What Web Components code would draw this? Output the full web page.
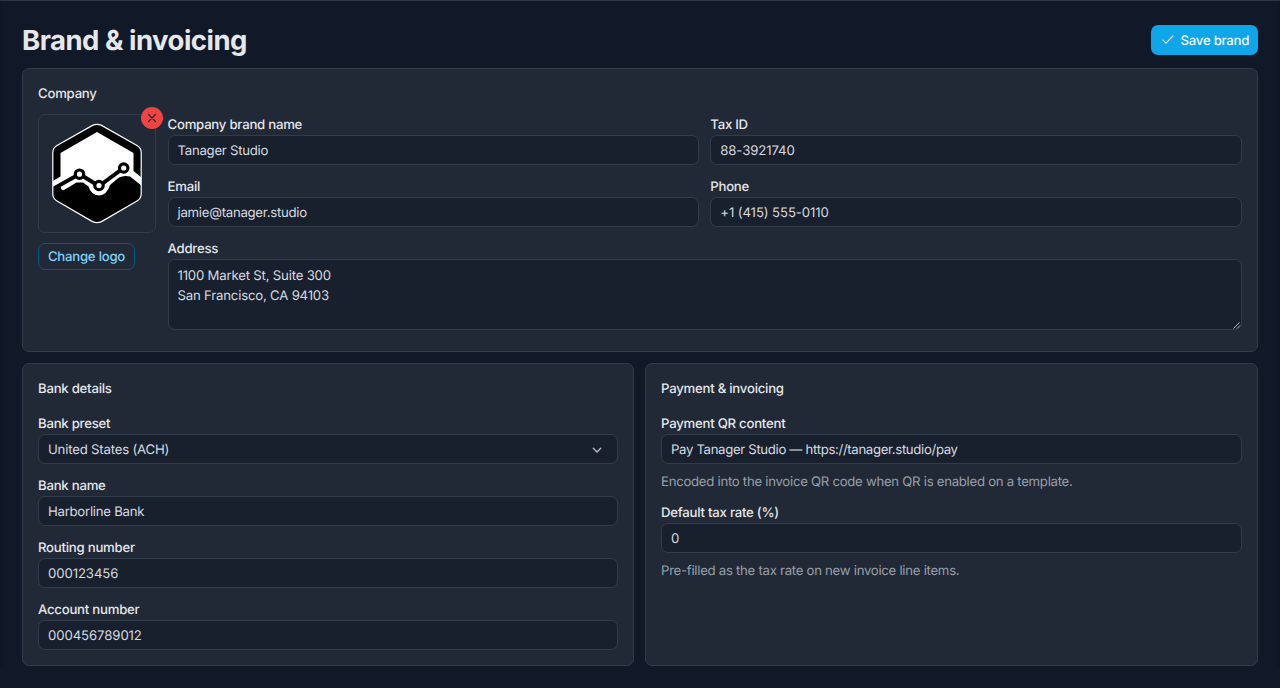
<!DOCTYPE html>
<html lang="en">
<head>
<meta charset="utf-8">
<title>Brand &amp; invoicing</title>
<style>
    :root {
        --page: #111827;
        --card: #212936;
        --field: #18202d;
        --line: #313c4a;
        --text: #e5e7eb;
        --value: #d7dae0;
        --muted: #989fa9;
        --accent: #0ea5e9;
        --radius: 7px;
    }
    body {
        margin: 0;
        height: 688px;
        overflow: hidden;
        background: var(--page);
        color: var(--text);
        font: 500 13.2px/20px Inter, sans-serif;
        letter-spacing: -0.25px;
        text-rendering: geometricPrecision;
    }
    /* figures are set a little looser than words */
    .figures { --track: -0.1px; }
    .mixed { --track: -0.2px; }
    .url { --track: -0.34px; }
</style>
</head>
<body>
<brand-page>
    <span slot="title">Brand &amp; invoicing</span>
    <save-button slot="action">Save brand</save-button>
    <form-card>
        <span slot="heading">Company</span>
        <company-layout>
            <logo-picker slot="logo">Change logo</logo-picker>
            <form-field label="Company brand name">Tanager Studio</form-field>
            <form-field class="figures" label="Tax ID">88-3921740</form-field>
            <form-field label="Email">jamie@tanager.studio</form-field>
            <form-field class="figures" label="Phone">+1 (415) 555-0110</form-field>
            <form-field class="mixed" label="Address" type="area">1100 Market St, Suite 300<br>San Francisco, CA 94103</form-field>
        </company-layout>
    </form-card>
    <card-row>
        <form-card class="stack">
            <span slot="heading">Bank details</span>
            <form-field class="mixed" label="Bank preset" type="select">United States (ACH)</form-field>
            <form-field label="Bank name">Harborline Bank</form-field>
            <form-field class="figures" label="Routing number">000123456</form-field>
            <form-field class="figures" label="Account number">000456789012</form-field>
        </form-card>
        <form-card class="stack">
            <span slot="heading">Payment &amp; invoicing</span>
            <form-field class="url" label="Payment QR content" hint="Encoded into the invoice QR code when QR is enabled on a template.">Pay Tanager Studio — https://tanager.studio/pay</form-field>
            <form-field label="Default tax rate (%)" hint="Pre-filled as the tax rate on new invoice line items.">0</form-field>
        </form-card>
    </card-row>
</brand-page>

<script>
class BaseElement extends HTMLElement {
    constructor() {
        super();
        this.root = this.attachShadow({mode: "open"});
        this.root.innerHTML = this.constructor.markup;
    }
}

class BrandPage extends BaseElement {
    static markup = `
        <style>
            :host {
                display: flex;
                flex-direction: column;
                box-sizing: border-box;
                height: 688px;
                padding: 24px 22px 0 22px;
                border-top: 1px solid #2c3644;
                background: linear-gradient(90deg, #0e1522, transparent 5px calc(100% - 5px), #0e1522) 0 0 / 100% 665px no-repeat;
            }
            header {
                display: flex;
                justify-content: space-between;
                height: 30px;
                margin-bottom: 13px;
            }
            h1 {
                margin: 0;
                font-size: 27.5px;
                font-weight: 700;
                line-height: 30px;
                letter-spacing: -0.5px;
            }
            main {
                display: flex;
                flex-direction: column;
                gap: 11px;
            }
        </style>
        <header>
            <h1><slot name="title"></slot></h1>
            <slot name="action"></slot>
        </header>
        <main><slot></slot></main>
    `;
}

class SaveButton extends BaseElement {
    static markup = `
        <style>
            :host {
                display: flex;
                align-items: center;
                box-sizing: border-box;
                gap: 6px;
                width: 107.5px;
                height: 30px;
                padding-left: 10px;
                border-radius: var(--radius);
                background: var(--accent);
                color: #f8fafc;
                white-space: nowrap;
            }
            svg { flex: none; }
            span { padding-top: 1px; }
        </style>
        <svg width="14" height="14" viewBox="0 0 14 14" fill="none" stroke="currentColor" stroke-width="1.1" stroke-linecap="round" stroke-linejoin="round">
            <path d="M2 7.2 5 10.2 12 2.8"/>
        </svg>
        <span><slot></slot></span>
    `;
}

class FormCard extends BaseElement {
    static markup = `
        <style>
            :host {
                display: block;
                box-sizing: border-box;
                padding: 15px;
                border: 1px solid var(--line);
                border-radius: var(--radius);
                background: var(--card);
            }
            h2 {
                margin: 0 0 10px;
                font: inherit;
            }
            .fields {
                display: flex;
                flex-direction: column;
                gap: 11px;
            }
            :host(.stack) h2 { margin-bottom: 14px; }
        </style>
        <h2><slot name="heading"></slot></h2>
        <div class="fields"><slot></slot></div>
    `;
}

class CardRow extends BaseElement {
    static markup = `
        <style>
            :host {
                display: grid;
                grid-template-columns: 612fr 613fr;
                gap: 11px;
                height: 302px;
            }
        </style>
        <slot></slot>
    `;
}

class CompanyLayout extends BaseElement {
    static markup = `
        <style>
            :host {
                display: grid;
                grid-template-columns: 118px 1fr;
                column-gap: 11.5px;
                height: 222px;
            }
            .grid {
                display: grid;
                grid-template-columns: 1fr 1fr;
                align-content: start;
                gap: 11px;
                --shift: 2px;
            }
            ::slotted([type="area"]) { grid-column: 1 / -1; }
        </style>
        <slot name="logo"></slot>
        <div class="grid"><slot></slot></div>
    `;
}

class LogoPicker extends BaseElement {
    static markup = `
        <style>
            :host {
                display: flex;
                flex-direction: column;
                align-items: flex-start;
                gap: 10px;
            }
            .frame {
                position: relative;
                box-sizing: border-box;
                width: 118px;
                height: 119px;
                border: 1px solid var(--line);
                border-radius: var(--radius);
            }
            .logo { display: block; }
            .remove {
                position: absolute;
                top: -8px;
                right: -8px;
                display: grid;
                place-items: center;
                width: 22px;
                height: 22px;
                border-radius: 50%;
                background: #ef4444;
                color: #212936;
            }
            .change {
                box-sizing: border-box;
                width: 97px;
                height: 27px;
                border: 1px solid #075985;
                border-radius: var(--radius);
                color: #7dd3fc;
                line-height: 27px;
                text-align: center;
                white-space: nowrap;
            }
        </style>
        <div class="frame">
            <svg class="logo" width="116" height="117" viewBox="0 0 116 117">
                <clipPath id="hex">
                    <path d="M53.5 10.4q4.5-2.2 9 0L98 30.4q4.2 2.5 4.2 7V79q0 4.5-4.2 7L62.5 106.6q-4.5 2.2-9 0L18 86q-4.2-2.5-4.2-7V37.4q0-4.5 4.2-7z"/>
                </clipPath>
                <g clip-path="url(#hex)">
                    <rect width="116" height="117"/>
                    <path fill="#fff" d="M58 17 94.5 38V56L103 63V71L91 61.5Q85 60 80 62.5L71 70Q68 80 60 80.5 52 80 49.5 71.5L44 67.5H37.5L24.5 75.2Q21.5 75 22 72L13 74V66.5L21.5 61.5V38z"/>
                    <path d="M12 75 40.5 59 60 71 84.5 53" fill="none" stroke="#000" stroke-width="4"/>
                    <g fill="#fff" stroke="#000" stroke-width="3.2">
                        <circle cx="40.5" cy="59.2" r="4.2"/>
                        <circle cx="60" cy="70.5" r="4.2"/>
                        <circle cx="84.7" cy="53" r="4.2"/>
                    </g>
                </g>
                <path fill="none" stroke="#fff" stroke-width="1.2" d="M53.5 10.4q4.5-2.2 9 0L98 30.4q4.2 2.5 4.2 7V79q0 4.5-4.2 7L62.5 106.6q-4.5 2.2-9 0L18 86q-4.2-2.5-4.2-7V37.4q0-4.5 4.2-7z"/>
            </svg>
            <div class="remove">
                <svg width="10" height="10" viewBox="0 0 10 10" stroke="currentColor" stroke-width="1.2" stroke-linecap="round">
                    <path d="M1.5 1.5 8.500 8.500M8.500 1.500 1.500 8.500"/>
                </svg>
            </div>
        </div>
        <div class="change"><slot></slot></div>
    `;
}

class FormField extends BaseElement {
    static markup = `
        <style>
            :host {
                display: block;
                min-width: 0;
            }
            .label {
                height: 20px;
                margin-bottom: 1px;
                line-height: 22px;
            }
            .control {
                display: flex;
                justify-content: space-between;
                align-items: center;
                box-sizing: border-box;
                height: 30px;
                padding: var(--shift, 1px) 9px 0;
                border: 1px solid var(--line);
                border-radius: var(--radius);
                background: var(--field);
                color: var(--value);
                font-weight: 400;
                letter-spacing: var(--track, -0.27px);
            }
            :host([type="area"]) .control {
                align-items: flex-start;
                height: 71px;
                padding-top: 6px;
                padding-right: 0;
            }
            .grip { align-self: flex-end; }
            .arrow { margin-right: 5px; }
            .hint {
                margin-top: 8px;
                margin-bottom: -1px;
                color: var(--muted);
                font-weight: 400;
                letter-spacing: -0.28px;
            }
            .arrow, .grip { display: none; flex: none; }
            :host([type="select"]) .arrow,
            :host([type="area"]) .grip { display: block; }
            .hint:empty { display: none; }
        </style>
        <div class="label"></div>
        <div class="control">
            <span><slot></slot></span>
            <svg class="arrow" width="12" height="12" viewBox="0 0 12 12" fill="none" stroke="#b4b9c2" stroke-width="1.4" stroke-linecap="round" stroke-linejoin="round">
                <path d="M2.3 4.3 6 8 9.7 4.3"/>
            </svg>
            <svg class="grip" width="8" height="8" viewBox="0 0 8 8" stroke="#b4b9c2" stroke-width="1">
                <path d="M.5 7.500 6.500 1.500M4 7.500 7 4.500"/>
            </svg>
        </div>
        <div class="hint"></div>
    `;

    static get observedAttributes() {
        return ['label', 'hint'];
    }

    attributeChangedCallback(attrName, oldVal, newVal) {
        this.root.querySelector('.' + attrName).textContent = newVal;
    }
}

window.customElements.define("brand-page", BrandPage);
window.customElements.define("save-button", SaveButton);
window.customElements.define("form-card", FormCard);
window.customElements.define("card-row", CardRow);
window.customElements.define("company-layout", CompanyLayout);
window.customElements.define("logo-picker", LogoPicker);
window.customElements.define("form-field", FormField);
</script>
</body>
</html>
